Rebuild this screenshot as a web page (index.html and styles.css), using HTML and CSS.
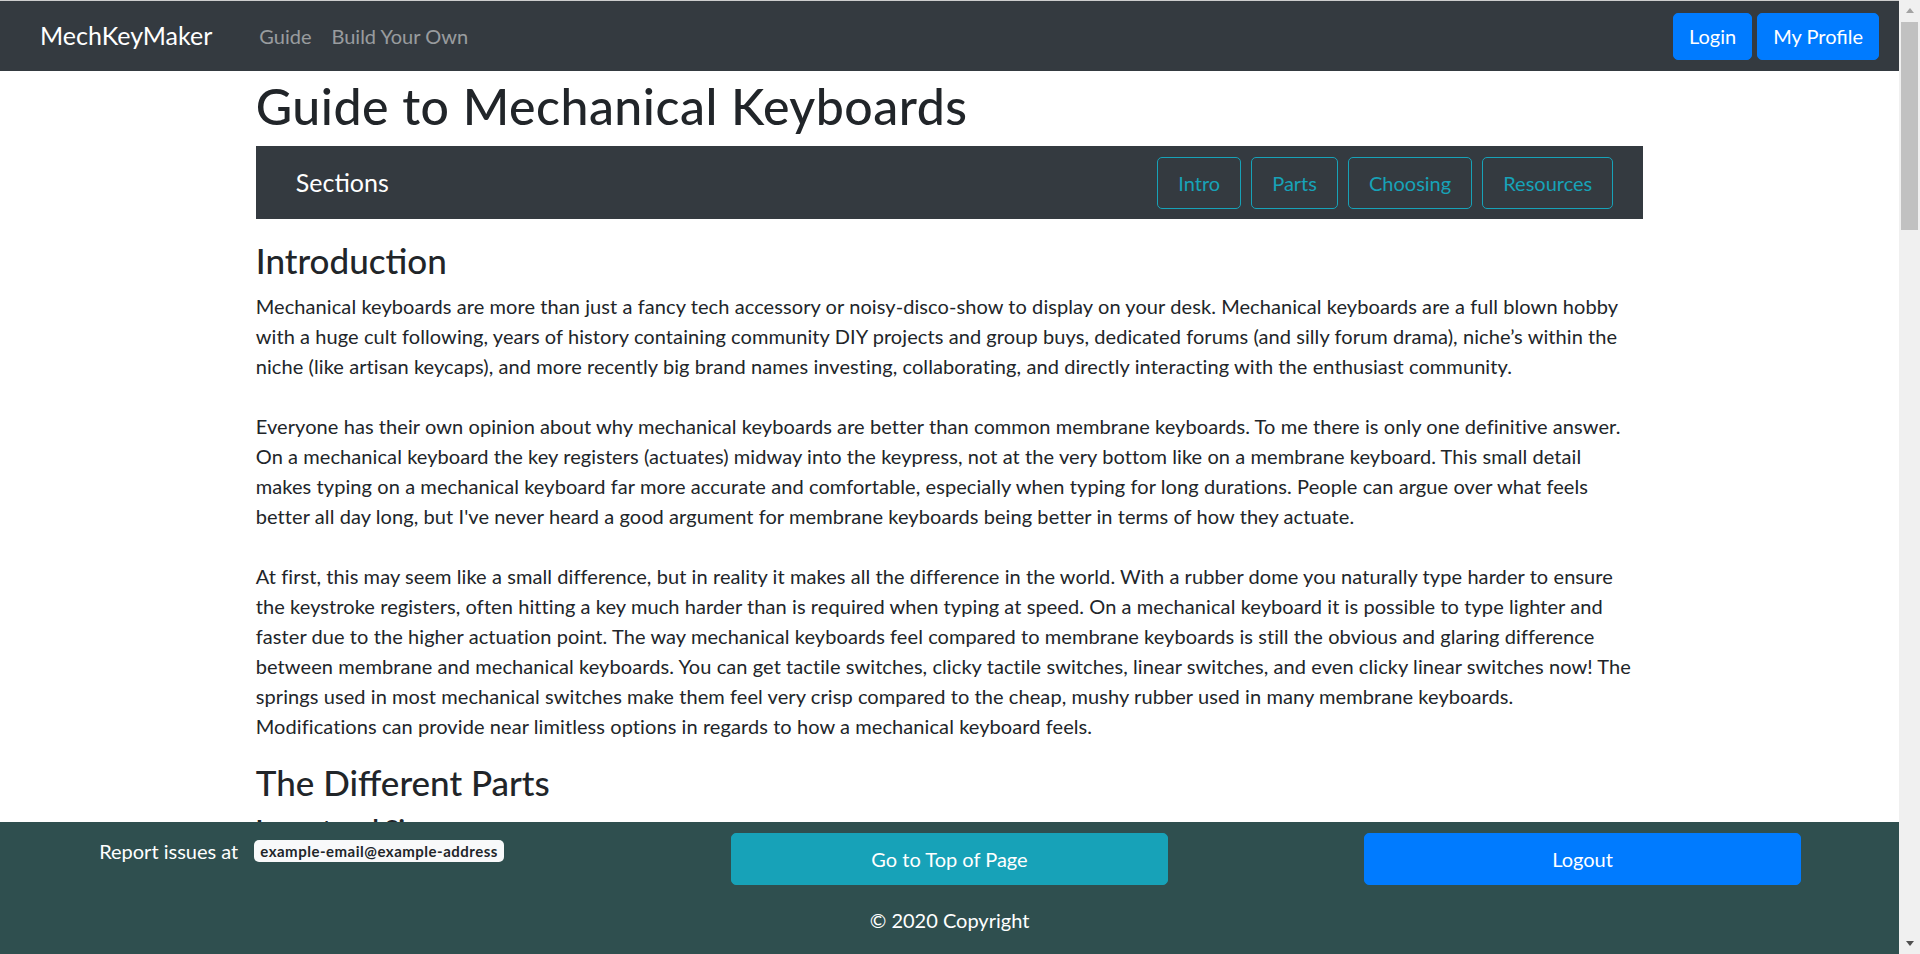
FILE: index.html
```html
<!DOCTYPE html>
<html lang="en">
<head>
<meta charset="utf-8">
<title>Guide to Mechanical Keyboards - MechKeyMaker</title>
<link rel="stylesheet" href="styles.css">
</head>
<body>
<header class="topbar">
  <a class="brand" href="#">MechKeyMaker</a>
  <nav class="mainnav">
    <a class="mainnav-link" href="#">Guide</a>
    <a class="mainnav-link" href="#">Build Your Own</a>
  </nav>
  <div class="account">
    <button class="btn btn-primary" type="button">Login</button>
    <button class="btn btn-primary" type="button">My Profile</button>
  </div>
</header>

<main class="container">
  <h1 class="page-title">Guide to Mechanical Keyboards</h1>

  <nav class="sections">
    <span class="sections-label">Sections</span>
    <div class="section-links">
      <a class="section-link" href="#intro">Intro</a>
      <a class="section-link" href="#parts">Parts</a>
      <a class="section-link" href="#choosing">Choosing</a>
      <a class="section-link" href="#resources">Resources</a>
    </div>
  </nav>

  <section id="intro" class="guide-section">
    <h3 class="section-title">Introduction</h3>
    <p class="guide-text intro-text">Mechanical keyboards are more than just a fancy tech accessory or noisy-disco-show to display on your desk. Mechanical keyboards are a full blown hobby<br>with a huge cult following, years of history containing community DIY projects and group buys, dedicated forums (and silly forum drama), niche’s within the<br>niche (like artisan keycaps), and more recently big brand names investing, collaborating, and directly interacting with the enthusiast community.<br><br>Everyone has their own opinion about why mechanical keyboards are better than common membrane keyboards. To me there is only one definitive answer.<br>On a mechanical keyboard the key registers (actuates) midway into the keypress, not at the very bottom like on a membrane keyboard. This small detail<br>makes typing on a mechanical keyboard far more accurate and comfortable, especially when typing for long durations. People can argue over what feels<br>better all day long, but I've never heard a good argument for membrane keyboards being better in terms of how they actuate.<br><br>At first, this may seem like a small difference, but in reality it makes all the difference in the world. With a rubber dome you naturally type harder to ensure<br>the keystroke registers, often hitting a key much harder than is required when typing at speed. On a mechanical keyboard it is possible to type lighter and<br>faster due to the higher actuation point. The way mechanical keyboards feel compared to membrane keyboards is still the obvious and glaring difference<br>between membrane and mechanical keyboards. You can get tactile switches, clicky tactile switches, linear switches, and even clicky linear switches now! The<br>springs used in most mechanical switches make them feel very crisp compared to the cheap, mushy rubber used in many membrane keyboards.<br>Modifications can provide near limitless options in regards to how a mechanical keyboard feels.</p>
  </section>

  <section id="parts" class="guide-section">
    <h3 class="section-title">The Different Parts</h3>
    <h5 class="sub-title">Layout and Size</h5>
    <p class="guide-text">The layout of a keyboard describes how many keys it has and where they sit. Full size boards carry a number pad, tenkeyless boards drop it, and compact 75%, 65% and 60% boards remove the function row, the navigation cluster or the arrow keys to save desk space.</p>
    <h5 class="sub-title">Switches</h5>
    <p class="guide-text">Switches are the heart of a mechanical keyboard. Linear switches travel smoothly from top to bottom, tactile switches have a bump that you can feel at the actuation point, and clicky switches add an audible click on top of that bump. Spring weight changes how hard you have to press.</p>
    <h5 class="sub-title">Keycaps</h5>
    <p class="guide-text">Keycaps come in many profiles, materials and legend types. ABS caps are smooth and vibrant, PBT caps are textured and resist shine, and doubleshot or dye-sublimated legends never wear off. Profiles such as Cherry, OEM, SA and DSA change the height and shape of every row.</p>
    <h5 class="sub-title">PCB, Plate and Case</h5>
    <p class="guide-text">The PCB is the circuit board that registers every keypress. Hot-swap PCBs let you change switches without soldering. The plate holds the switches in place and changes the sound and stiffness of the board, while the case ties everything together and has a big influence on weight and acoustics.</p>
    <h5 class="sub-title">Stabilizers</h5>
    <p class="guide-text">Long keys such as the spacebar, shift, enter and backspace use stabilizers so that they press down evenly. Lubing and tuning stabilizers removes rattle and is one of the most noticeable upgrades you can make to any board.</p>
  </section>

  <section id="choosing" class="guide-section">
    <h3 class="section-title">Choosing a Keyboard</h3>
    <p class="guide-text">Start by choosing a layout that fits your desk and the way you work. Then pick a switch type that suits your typing style, and decide whether you want a prebuilt board or a kit that you assemble yourself. Budget, connectivity, software and lighting are the last things to think about.</p>
    <p class="guide-text">If you are unsure, a hot-swap board is a safe first choice: you can try several switches and keep the ones you like. Switch testers are a cheap way to feel many switches before buying a full set.</p>
    <p class="guide-text">Remember that a keyboard is a tool you touch every day. Take your time, read reviews, listen to sound tests and, if you can, try a few boards in person before you decide.</p>
  </section>

  <section id="resources" class="guide-section">
    <h3 class="section-title">Resources</h3>
    <p class="guide-text">Community forums, group buy trackers, switch databases and build guides are the best places to keep learning about the hobby. Local meetups are a great way to try boards and meet other enthusiasts.</p>
    <ul class="resource-list">
      <li>Keyboard layout editors</li>
      <li>Switch comparison charts</li>
      <li>Firmware configurators</li>
      <li>Group buy and interest check trackers</li>
      <li>Build, lubing and modding guides</li>
    </ul>
  </section>
</main>

<footer class="footer">
  <div class="footer-row">
    <div class="footer-col footer-report">
      <span>Report issues at</span>
      <span class="badge">example-email@example-address</span>
    </div>
    <div class="footer-col">
      <a class="btn btn-info btn-wide" href="#">Go to Top of Page</a>
    </div>
    <div class="footer-col">
      <button class="btn btn-primary btn-wide" type="button">Logout</button>
    </div>
  </div>
  <div class="copyright">© 2020 Copyright</div>
</footer>

<div class="scrollbar" aria-hidden="true">
  <span class="sb-button"><span class="sb-arrow sb-arrow-up"></span></span>
  <span class="sb-thumb"></span>
  <span class="sb-track"></span>
  <span class="sb-button"><span class="sb-arrow sb-arrow-down"></span></span>
</div>
</body>
</html>
```

FILE: styles.css
```css
* {
  box-sizing: border-box;
}

:root {
  --scrollbar-width: 21px;
}

html {
  border-top: 1px solid #cdcdcd;
}

body {
  margin: 0;
  padding-right: var(--scrollbar-width);
  font-family: Lato, "Liberation Sans", sans-serif;
  font-size: 20px;
  line-height: 1.5;
  color: #212529;
  background: #ffffff;
}

a {
  text-decoration: none;
}

/* ---------- top bar ---------- */
.topbar {
  display: flex;
  align-items: center;
  height: 70px;
  padding: 10px 20px;
  background: #343a40;
}

.brand {
  margin-left: 20px;
  padding: 6px 0;
  font-size: 25px;
  line-height: 37.5px;
  color: #ffffff;
}

.mainnav {
  display: flex;
  margin-left: 37px;
}

.mainnav-link {
  padding: 10px;
  font-size: 20px;
  line-height: 30px;
  color: rgba(255, 255, 255, 0.5);
}

.account {
  display: flex;
  gap: 5px;
  margin-left: auto;
}

.btn {
  display: inline-block;
  border: 1px solid transparent;
  border-radius: 5px;
  padding: 7.5px 15px;
  font-family: inherit;
  font-size: 20px;
  line-height: 30px;
  text-align: center;
  color: #ffffff;
  cursor: pointer;
}

.btn-primary {
  background: #007bff;
  border-color: #007bff;
}

.btn-info {
  background: #17a2b8;
  border-color: #17a2b8;
}

/* ---------- main ---------- */
.container {
  max-width: 1425px;
  margin: 0 auto;
  padding: 0 18.75px 160px;
  min-height: 4100px;
}

.page-title {
  margin: 5px 0 10px;
  font-size: 50px;
  line-height: 60px;
  font-weight: 500;
  letter-spacing: 0.5px;
}

.sections {
  display: flex;
  align-items: center;
  justify-content: space-between;
  padding: 10.5px 30px 10.5px 40px;
  background: #343a40;
}

.sections-label {
  font-size: 25px;
  line-height: 37.5px;
  color: #ffffff;
}

.section-links {
  display: flex;
  gap: 10px;
}

.section-link {
  padding: 10px 20px;
  border: 1px solid #17a2b8;
  border-radius: 5px;
  font-size: 20px;
  line-height: 30px;
  color: #17a2b8;
}

.guide-section {
  margin: 0;
}

.section-title {
  margin: 20px 0 10px;
  font-size: 35px;
  line-height: 42px;
  font-weight: 500;
}

#parts .section-title,
#choosing .section-title,
#resources .section-title {
  margin-top: 0;
}

.sub-title {
  margin: 0 0 10px;
  font-size: 25px;
  line-height: 30px;
  font-weight: 700;
}

.guide-text {
  margin: 0 0 20px;
}

.intro-text {
  margin-right: -18.75px;
  letter-spacing: 0.08px;
}

.resource-list {
  margin: 0 0 20px;
  padding-left: 40px;
}

/* ---------- footer ---------- */
.footer {
  position: fixed;
  left: 0;
  right: var(--scrollbar-width);
  bottom: 0;
  height: 132px;
  padding-top: 11px;
  background: #2f4f4f;
  color: #ffffff;
}

.footer-row {
  display: grid;
  grid-template-columns: 1fr 1fr 1fr;
}

.footer-col {
  display: flex;
  justify-content: center;
  align-items: flex-start;
}

.footer-report {
  padding: 2px 30px 0 0;
  gap: 16px;
  align-items: center;
  height: 34px;
}

.badge {
  display: inline-block;
  padding: 0 6px;
  border-radius: 5px;
  background: #f8f9fa;
  color: #212529;
  font-size: 15px;
  line-height: 22px;
  font-weight: 700;
  letter-spacing: 0.5px;
}

.btn-wide {
  width: 437px;
  padding: 10px 15px;
}

.copyright {
  margin-top: 20px;
  text-align: center;
  line-height: 30px;
}

/* ---------- window scrollbar (as in the screenshot) ---------- */
.scrollbar {
  position: fixed;
  top: 0;
  right: 0;
  bottom: 0;
  width: var(--scrollbar-width);
  display: flex;
  flex-direction: column;
  background: #f0f0f0;
}

.sb-button {
  display: flex;
  align-items: center;
  justify-content: center;
  height: 21px;
  flex: none;
}

.sb-arrow {
  width: 0;
  height: 0;
  border-left: 4.5px solid transparent;
  border-right: 4.5px solid transparent;
}

.sb-arrow-up {
  border-bottom: 5px solid #a3a3a3;
}

.sb-arrow-down {
  border-top: 5px solid #505050;
}

.sb-thumb {
  flex: none;
  height: 208px;
  margin: 1px 2px 0;
  background: #c1c1c1;
}

.sb-track {
  flex: 1;
}
```
